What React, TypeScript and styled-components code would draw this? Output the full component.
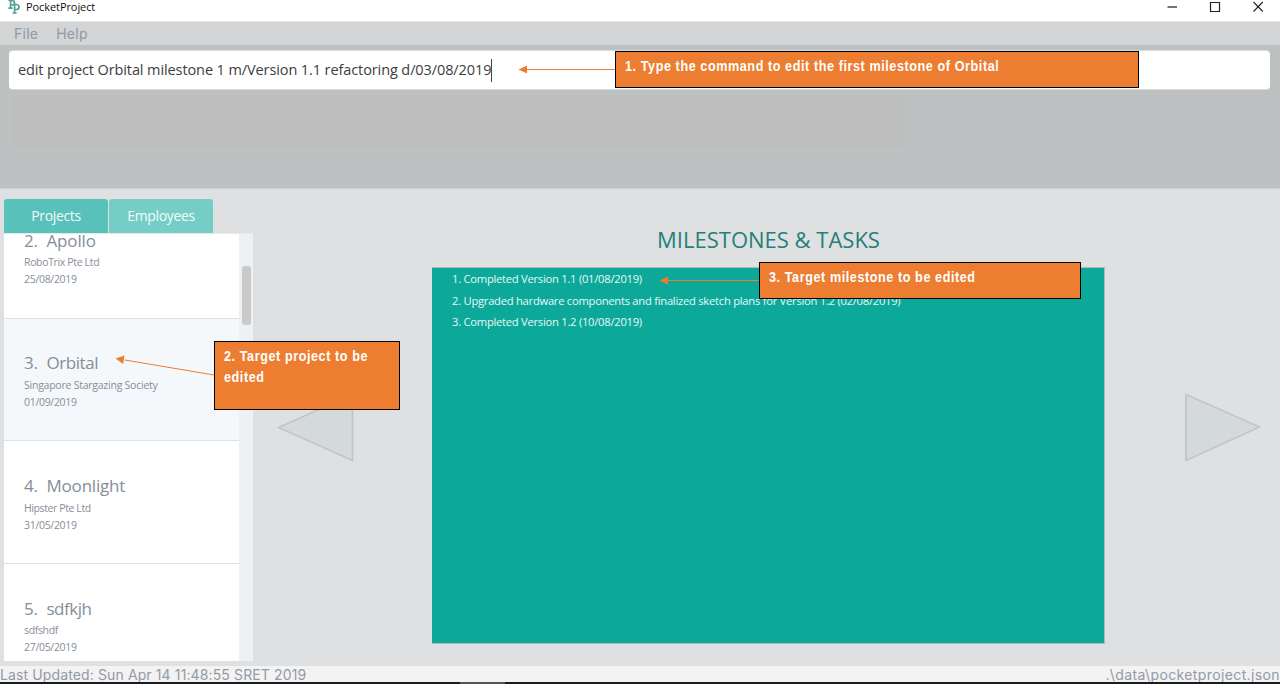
import React from 'react';
import styled, { createGlobalStyle } from 'styled-components';

const ui = `'Open Sans', 'Noto Sans', sans-serif`;

const GlobalStyle = createGlobalStyle`
  * { box-sizing: border-box; }
  body { margin: 0; background: #fff; overflow: hidden; }
`;

const Window = styled.div`
  position: relative;
  display: flex;
  flex-direction: column;
  width: 1280px;
  height: 684px;
  background: #dee0e2;
  font-family: ${ui};
  overflow: hidden;
`;

const TitleBar = styled.header`
  display: flex;
  justify-content: space-between;
  height: 22px;
  flex: none;
  background: #fff;
  border-bottom: 1px solid #e6e7e8;
`;

const Brand = styled.div`
  display: flex;
  gap: 6px;
  padding-left: 8px;
`;

const Text = styled.span<{ $size: number; $line: number; $spacing?: number; $color?: string }>`
  display: block;
  white-space: pre;
  font-size: ${p => p.$size}px;
  line-height: ${p => p.$line}px;
  letter-spacing: ${p => p.$spacing ?? 0}px;
  color: ${p => p.$color ?? 'inherit'};
`;

const Controls = styled.div`
  display: flex;
  gap: 31px;
  padding: 1px 16px 0 0;
`;

const MenuBar = styled.nav`
  display: flex;
  gap: 18px;
  height: 23px;
  flex: none;
  padding-left: 14px;
  background: #d2d4d6;
  color: #9199a5;
  font-family: Inter, sans-serif;
`;

const CommandArea = styled.section`
  height: 144px;
  flex: none;
  padding: 5px 10px 0 9px;
  background: #bdc1c2;
  border-bottom: 1px solid #d0d3d4;
`;

const CommandBox = styled.div`
  display: flex;
  align-items: center;
  height: 40px;
  padding-left: 9px;
  background: #fff;
  border: 1px solid #d9dbdc;
  border-width: 1px 0;
  border-radius: 4px;
`;

const Caret = styled.i`
  width: 1px;
  height: 23px;
  background: #444;
`;

const ResultBox = styled.div`
  width: 893px;
  height: 52px;
  margin: 6px 0 0 2px;
  background: #bebebe;
`;

const Main = styled.main`
  display: flex;
  flex: 1;
  min-height: 0;
`;

const Sidebar = styled.aside`
  display: flex;
  flex-direction: column;
  flex: none;
  width: 253px;
  padding: 10px 0 5px 4px;
`;

const Tabs = styled.div`
  display: flex;
  gap: 1px;
  flex: none;
`;

const Tab = styled.div<{ $active?: boolean }>`
  display: flex;
  justify-content: center;
  width: 104px;
  height: 34px;
  border-radius: 3px 3px 0 0;
  background: ${p => (p.$active ? '#58c1b9' : '#75cec6')};
  color: #f2fbfa;
`;

const ListPane = styled.div`
  display: flex;
  flex: 1;
  min-height: 0;
  overflow: hidden;
  border-top: 1px solid #e6e8ea;
`;

const List = styled.div`
  width: 235px;
  display: flex;
  flex-direction: column;
  margin-top: -38px;
`;

const Card = styled.article<{ $selected?: boolean }>`
  height: 122.7px;
  flex: none;
  padding: 31.6px 0 0 20px;
  border-bottom: 1.3px solid #dfe1e4;
  background: ${p => (p.$selected ? '#f4f8fb' : '#fff')};
  color: #868e99;
`;

const Heading = styled.div`
  display: flex;
  margin-bottom: 0.7px;
`;

const Index = styled.div`
  width: 22.5px;
`;

const ScrollTrack = styled.div`
  width: 14px;
  padding: 32px 2px 0 3px;
  background: #edf1f4;
`;

const Thumb = styled.div`
  height: 59px;
  border-radius: 3px;
  background: #cacaca;
`;

const Carousel = styled.section`
  display: flex;
  flex: 1;
  padding-left: 24px;
`;

const ArrowButton = styled.button`
  align-self: flex-start;
  margin: 204px 0 0;
  padding: 0;
  border: 0;
  background: none;
  line-height: 0;
`;

const Slide = styled.div`
  width: 673px;
  flex: none;
  display: flex;
  flex-direction: column;
  align-items: center;
  margin: 0 79px 0 77px;
  padding-top: 35px;
`;

const Board = styled.div`
  width: 673px;
  height: 377px;
  margin-top: 12px;
  padding: 0 20px;
  background: #0ca99a;
  border: 1px solid #a9bcbb;
  border-left-width: 0;
  color: #e9f7f5;
`;

const StatusBar = styled.footer`
  display: flex;
  justify-content: space-between;
  flex: none;
  height: 16px;
  background: #f3f3f4;
  color: #929aa5;
  font-family: Inter, sans-serif;
`;

const DesktopEdge = styled.div`
  height: 2px;
  flex: none;
  background: linear-gradient(to right, #1c1b1d 460px, #555557 460px, #555557 505px, #1c1b1d 505px);
`;

const Callout = styled.div<{ $x: number; $y: number; $w: number; $h: number }>`
  position: absolute;
  left: ${p => p.$x}px;
  top: ${p => p.$y}px;
  width: ${p => p.$w}px;
  height: ${p => p.$h}px;
  padding: 3px 9px;
  background: #ed7d31;
  border: 1px solid #000;
`;

const CalloutText = styled.p`
  margin: 0;
  width: max-content;
  white-space: pre;
  color: #fff;
  font: 700 15px/21px 'Liberation Sans', sans-serif;
  letter-spacing: 0.69px;
  transform: scaleX(0.84);
  transform-origin: left top;
`;

const Pointers = styled.svg`
  position: absolute;
  left: 0;
  top: 0;
  pointer-events: none;
`;

const projects = [
  { id: 2, name: 'Apollo', client: 'RoboTrix Pte Ltd', date: '25/08/2019', ns: -0.15, cs: -0.35 },
  { id: 3, name: 'Orbital', client: 'Singapore Stargazing Society', date: '01/09/2019', ns: -0.45, cs: -0.24 },
  { id: 4, name: 'Moonlight', client: 'Hipster Pte Ltd', date: '31/05/2019', ns: -0.2, cs: -0.4 },
  { id: 5, name: 'sdfkjh', client: 'sdfshdf', date: '27/05/2019', ns: -0.5, cs: -0.35 },
];

const milestones = [
  '1. Completed Version 1.1 (01/08/2019)',
  '2. Upgraded hardware components and finalized sketch plans for Version 1.2 (02/08/2019)',
  '3. Completed Version 1.2 (10/08/2019)',
];

const Triangle = ({ left }: { left?: boolean }) => (
  <svg width="78" height="71" viewBox="0 0 78 71">
    <path
      d={left ? 'M1.5 34.5 75.5 1.5V67.5Z' : 'M2 1.5 75.5 34 2 67.5Z'}
      fill="#d4d9da" stroke="#c3c5c6" strokeWidth="1.8" strokeLinejoin="round"
    />
  </svg>
);

export default function App() {
  return (
    <>
      <GlobalStyle />
      <Window>
        <TitleBar>
          <Brand>
            <svg width="12" height="15" viewBox="0 0 12 15" fill="none" stroke="#559f9b" strokeWidth="1.7">
              <path d="M2.6 0V8M0.3 8.2H4.6M0.500 .5H4.500Q6.500 .8 6.500 2.800T4.500 5H2.600" />
              <path d="M6.600 4V13M4.500 13H8.600M5 4.500H8.800Q11 5 11 7T8.800 9.500H6.600" />
            </svg>
            <Text $size={11} $line={14} $spacing={-0.08} $color="#111">PocketProject</Text>
          </Brand>
          <Controls>
            <svg width="12" height="12" viewBox="0 0 12 12"><path d="M1.500 6H11" stroke="#444" strokeWidth="1.500" /></svg>
            <svg width="12" height="12" viewBox="0 0 12 12"><path d="M1.500 1.500H10.500V10.500H1.500Z" fill="none" stroke="#222" strokeWidth="1.200" /></svg>
            <svg width="12" height="12" viewBox="0 0 12 12"><path d="M1.500 1 10.800 10.500M10.800 1 1.500 10.500" stroke="#222" strokeWidth="1.100" /></svg>
          </Controls>
        </TitleBar>

        <MenuBar>
          <Text $size={14} $line={23} $spacing={0.25}>File</Text>
          <Text $size={14} $line={23} $spacing={0.25}>Help</Text>
        </MenuBar>

        <CommandArea>
          <CommandBox>
            <Text $size={14.5} $line={36} $spacing={-0.1} $color="#3d3d3d">edit project Orbital milestone 1 m/Version 1.1 refactoring d/03/08/2019</Text>
            <Caret />
          </CommandBox>
          <ResultBox />
        </CommandArea>

        <Main>
          <Sidebar>
            <Tabs>
              <Tab $active><Text $size={14} $line={34} $spacing={-0.35}>Projects</Text></Tab>
              <Tab><Text $size={14} $line={34} $spacing={-0.35}>Employees</Text></Tab>
            </Tabs>
            <ListPane>
              <List>
                {projects.map(p => (
                  <Card key={p.id} $selected={p.id === 3}>
                    <Heading>
                      <Index><Text $size={17} $line={26} $spacing={-0.3}>{p.id}.</Text></Index>
                      <Text $size={17} $line={26} $spacing={p.ns}>{p.name}</Text>
                    </Heading>
                    <Text $size={10.5} $line={17} $spacing={p.cs}>{p.client}</Text>
                    <Text $size={10.5} $line={17} $spacing={-0.3}>{p.date}</Text>
                  </Card>
                ))}
              </List>
              <ScrollTrack><Thumb /></ScrollTrack>
            </ListPane>
          </Sidebar>

          <Carousel>
            <ArrowButton aria-label="Previous"><Triangle left /></ArrowButton>
            <Slide>
              <Text $size={22} $line={31} $color="#1f8177">MILESTONES &amp; TASKS</Text>
              <Board>
                {milestones.map(m => (
                  <Text key={m} $size={11.2} $line={21.5} $spacing={-0.25}>{m}</Text>
                ))}
              </Board>
            </Slide>
            <ArrowButton aria-label="Next"><Triangle /></ArrowButton>
          </Carousel>
        </Main>

        <StatusBar>
          <Text $size={14} $line={17} $spacing={0.12}>Last Updated: Sun Apr 14 11:48:55 SRET 2019</Text>
          <Text $size={14} $line={17} $spacing={0.38}>.\data\pocketproject.json</Text>
        </StatusBar>
        <DesktopEdge />

        <Pointers width="1280" height="684" viewBox="0 0 1280 684" stroke="#ed7d31" fill="#ed7d31">
          <path d="M526 69.500H615M125 360 214 375M668 280.500H760" fill="none" />
          <path d="M518.500 69.500 527 65.500V73.500ZM115.500 358.500 124.500 355.500 123.200 364ZM659.500 280.500 668 276.500V284.500Z" stroke="none" />
        </Pointers>
        <Callout $x={615} $y={51} $w={524} $h={37}>
          <CalloutText>1. Type the command to edit the first milestone of Orbital</CalloutText>
        </Callout>
        <Callout $x={214} $y={341} $w={186} $h={69}>
          <CalloutText>{'2. Target project to be\nedited'}</CalloutText>
        </Callout>
        <Callout $x={759} $y={262} $w={322} $h={37}>
          <CalloutText>3. Target milestone to be edited</CalloutText>
        </Callout>
      </Window>
    </>
  );
}
